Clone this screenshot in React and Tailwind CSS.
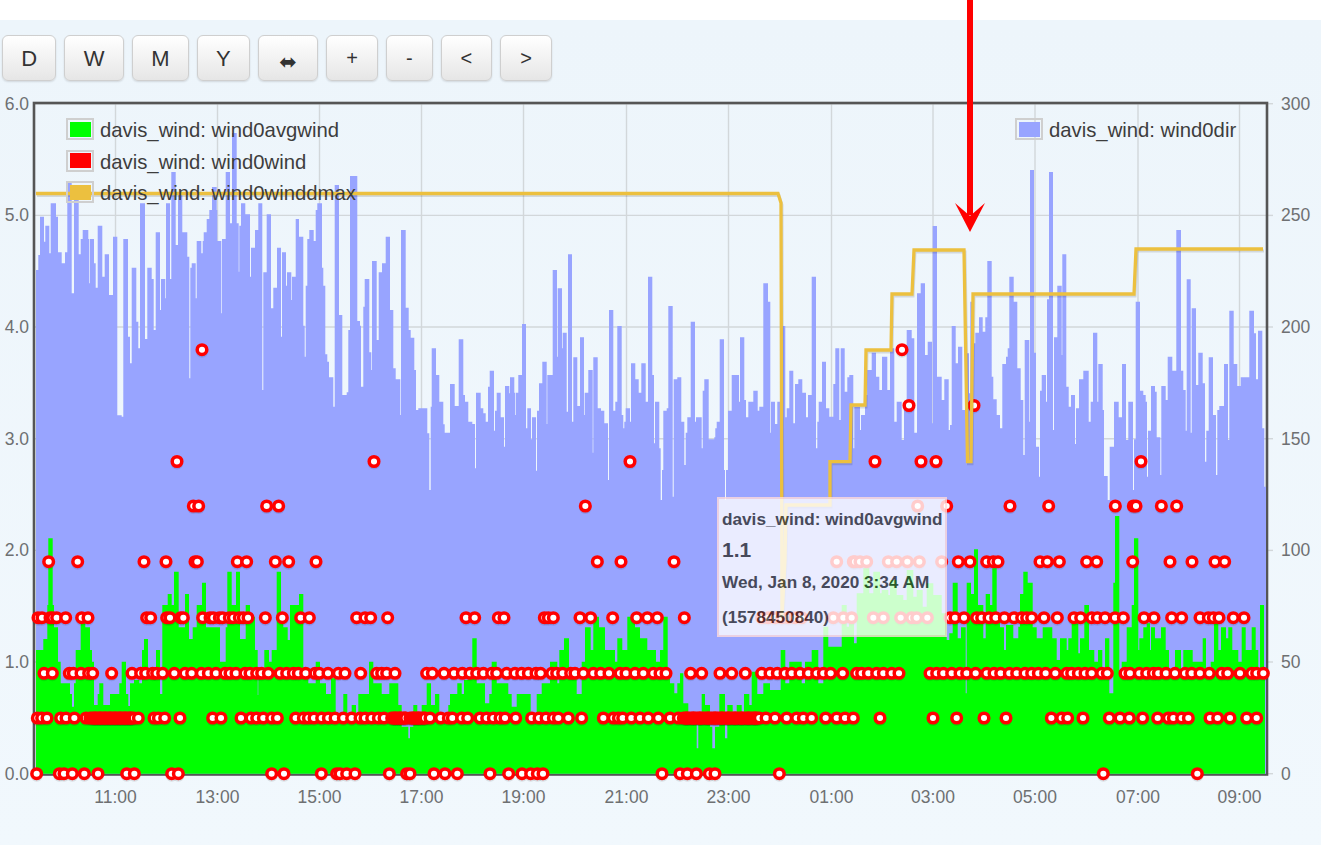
const buttons = ["D", "W", "M", "Y", "⬌", "+", "-", "<", ">"]

// silhouettes sampled from the chart at 3x: [x0, y0, [px, py, px, py, ...]]
const blueSteps = [
  [30, 190, [18,240,25,195,30,80,42,155,46,107,58,190,62,40,78,80,84,187,95,220,105,187,112,-21,125,310,132,20,146,193,152,147,158,120,175,147,178,280,180,147,192,220,197,293,203,107,217,260,224,193,237,315,249,140,262,676,275,680,280,147,294,440,300,520,305,233,319,395,325,475,330,40,345,447,352,233,365,267,371,420,377,127,390,360,393,267,406,325,408,40,420,267,424,-54,437,165,444,6,457,127,472,200,478,565,481,233,485,220,497,325,500,153,514,190,518,153,521,127,530,87,538,60,546,-9,560,60,562,153,574,370,576,147,587,-54,600,100,606,-171,620,100,626,245,628,107,633,40,646,73,660,260,663,173,675,120,685,40,697,600,700,247,710,73,723,355,730,293,741,173,753,440,756,187,768,287,771,247,784,330,786,260,797,87,807,140,820,407,824,500,827,287,832,147,838,120,851,153,857,60,862,40,876,233,880,287,886,493,892,515,897,562,910,650,914,-15,927,375,937,615,950,607,955,420,960,-42,982,393,990,407,993,590,1000,350,1004,267,1018,487,1024,540,1026,213,1040,450,1046,247,1056,220,1067,140,1080,360,1090,535,1097,568,1111,675,1113,120,1127,353,1136,420,1142,443,1153,540,1158,660,1165,655,1192,730,1198,900,1202,650,1205,475,1218,555,1228,635,1240,703,1244,728]],
  [440, 220, [30,492,44,558,56,358,70,525,75,545,85,605,97,612,105,745,108,518,122,565,130,580,137,605,144,500,149,452,162,632,165,572,170,518,182,592,192,680,195,498,208,520,210,472,223,518,226,585,228,518,235,465,246,312,258,625,262,565,273,658,276,592,288,752,291,572,297,490,307,425,320,612,322,465,338,150,351,410,353,205,366,385,368,338,380,575,384,103,396,605,400,412,412,558,420,352,432,585,434,518,445,450,458,698,460,412,473,565,483,572,493,610,504,780,507,270,520,572,526,545,532,318,545,585,550,625,553,605,557,565,570,605,573,430,586,478,596,518,604,430,617,545,624,170,637,465,642,670,645,545,658,685,662,840,666,750,670,572,680,565,685,258,698,830,701,478,712,472,724,605,733,735,737,638,742,592,752,305,765,605,768,592,785,685,788,512,793,478,806,658,823,652,826,625,830,605,839,358,852,750,855,840,858,750,864,572,875,465,897,545,900,352,913,540,918,592,925,545,940,512,953,572,958,560,970,190,984,245,991,638,993,545,1005,612,1012,545,1024,318,1036,592,1040,565,1048,452,1060,610,1065,492,1075,478,1087,518,1098,592,1104,525,1115,170,1128,685,1132,605,1136,545,1146,425,1158,565,1168,590,1180,492,1186,385,1198,600,1202,385,1214,515,1222,472,1228,465,1240,685,1243,560]],
  [760, 230, [300,600,303,555,315,495,322,420,335,368,348,440,358,480,366,380,382,480,390,355,403,575,410,515,425,630,432,525,440,300,455,325,463,608,471,190,482,160,495,375,503,335,516,580,518,-12,531,440,545,510,553,448,566,600]],
  [950, 220, [0,615,5,318,17,430,24,380,37,570,50,400,57,520,61,245,70,370,76,338,87,292,98,335,106,292,112,123,125,470,130,538,140,585,150,625,157,432,168,410,173,385,178,170,191,245,202,445,212,540,220,705,224,360,238,605,240,-150,252,398,258,680,267,770,270,512,275,465,288,545,291,238,297,-144,309,630,312,352,322,197,335,405,337,103,349,500,356,560,363,525,375,672,378,565,387,478,400,452,416,605,422,545,429,338,442,545,445,432,458,570,462,768,473,840,479,680,492,545,506,592,516,432,528,660,535,545,549,810,552,658,557,245,570,512,580,525,587,545,591,770,594,632,603,498,615,515,620,652,631,765,634,498,647,540,653,410,667,452,679,30,693,452,700,510,707,632,710,178,722,638,725,265,738,495,745,398,758,490,765,725,769,632,776,412,789,585,798,765,802,570,808,558,822,432,834,660,838,272,851,432,862,498,872,472,898,272,912,340,918,478,924,332,937,625,943,800]],
]

const greenSteps = [
  [30, 490, [18,480,40,447,52,345,55,145,68,345,72,412,84,515,92,580,120,612,126,650,132,580,137,480,152,400,166,412,180,480,186,515,192,645,203,612,208,580,220,645,240,612,268,580,275,515,288,612,295,648,300,580,312,570,328,580,336,480,342,447,354,550,378,480,390,612,397,345,413,312,425,345,432,245,446,412,465,312,477,447,488,412,500,345,516,278,528,412,570,515,587,412,592,245,605,345,618,245,630,447,647,345,660,380,675,480,683,615,685,550,703,480,717,515,725,480,740,245,753,380,760,412,773,450,780,345,807,312,820,560,835,580,857,515,870,580,888,612,903,565,917,670,940,612,952,680,965,645,978,670,985,612,1017,515,1030,580,1055,612,1078,580,1105,645,1115,710,1135,745,1140,710,1150,645,1162,680,1175,645,1190,580,1203,645,1215,612,1228,680,1255,645]],
  [440, 490, [30,612,40,612,52,580,65,612,72,570,85,550,97,445,110,580,135,640,148,612,155,515,170,580,205,612,215,650,230,612,272,680,290,612,305,580,330,515,352,580,358,480,372,445,387,550,410,612,425,515,435,412,452,480,460,380,477,412,495,480,525,515,532,445,547,480,562,380,585,412,600,445,622,480,648,515,660,480,670,380,683,555,690,580,703,610,712,580,720,550,730,640,745,680,770,775,775,680,785,612,795,645,810,710,817,775,825,710,838,612,855,745,862,645,878,680,890,645,905,680,912,612,928,645,935,545,952,612,970,580,990,600,1022,480,1036,580,1048,515,1068,515,1085,580,1095,515,1115,480,1135,580]],
  [700, 480, [370,440,385,500,425,375,440,440,447,420,462,490,470,340,490,265,508,340,520,275,540,340,545,330,565,345,570,300,590,345,610,360,620,270,640,350,650,330,668,380,680,310,700,345,715,345,725,400,740,480]],
  [850, 490, [298,430,308,278,323,445,333,412,347,610,350,278,363,312,372,178,384,345,400,445,407,312,420,345,427,235,440,380,450,412,462,480,468,405,490,445,505,410,510,312,520,245,533,278,548,412,560,445,578,412,607,445,620,510,630,445,650,480,655,445,665,400,685,490,690,445,703,345,717,480,733,515,744,480,757,550,765,445,778,610,790,278,795,78,808,540,815,515,830,412,845,345,852,145,865,480,868,445,880,412,890,400,900,480,903,412,915,445,933,412,947,480,957,550,975,480,993,545,1000,480,1013,480,1028,515,1045,515,1058,445,1068,550,1082,515,1092,400,1105,480,1113,412,1128,445,1135,412,1147,480,1165,515,1175,412,1187,480,1205,412,1217,480,1225,550,1230,345,1242,560]],
]

// wind0wind readings per row, same 3x sampling
const pointRows = [
  [349.7, [[0, [202, 902]]]],
  [405.5, [[0, [909, 974]]]],
  [461.5, [[0, [177, 374, 630, 875, 921, 936, 1141]]]],
  [506, [[30, [490,506,710,746]], [440, [436]], [850, [203,290,480,596,796,850,858,934,980]]]],
  [561.7, [[30, [56,143,342,408,495,502,622,650,736,776,858]], [440, [472,543,702,1190,1240]], [850, [15,30,50,115,140,172,208,275,325,360,410,430,444,570,592,628,710,740,848,960,1026,1095,1124]]]],
  [617.7, [[30, [24,36,60,68,80,107,155,174,350,362,410,420,452,460,518,540,550,568,578,598,610,628,640,654,706,757,812,838,980,1005,1022,1073]], [440, [78,104,175,192,313,325,340,420,452,518,590,622,652,733,965,985,1005,1025,1045,1065,1085,1180,1210]], [850, [5,70,100,152,185,200,232,300,315,342,380,395,417,437,463,492,515,530,545,582,622,672,692,725,742,765,795,820,882,912,965,995,1050,1075,1090,1107,1150,1182]]]],
  [673.3, [[30, [42,67,118,130,153,176,188,245,306,332,347,368,380,398,433,465,485,514,535,558,585,600,618,645,660,680,695,715,750,770,790,805,827,855,868,894,925,945,992,1040,1055,1070,1095,1190,1207,1242]], [440, [42,67,90,110,130,155,170,200,225,245,265,288,302,335,350,368,392,405,430,460,482,507,540,558,585,610,640,660,678,752,785,840,875,916,965,990,1012,1035,1055,1080,1105,1130,1150,1172,1208]], [850, [20,35,55,80,100,125,147,240,260,280,305,330,350,377,410,432,452,478,500,525,545,565,587,616,650,665,685,705,725,755,772,825,840,868,890,910,925,948,975,1005,1025,1050,1078,1115,1133,1170,1205,1220,1240]]]],
  [718, [[30, [22,35,51,92,108,133,168,195,210,225,240,255,270,285,300,325,372,385,404,450,548,573,633,663,680,700,725,742,797,820,835,852,875,895,915,940,965,990,1005,1025,1045,1062,1095,1110,1125,1150,1165,1185,1200,1232,1255]], [440, [37,65,83,120,140,160,180,195,227,275,297,318,340,355,385,425,490,520,535,548,574,600,625,655,690,715,740,760,780,805,825,845,865,885,905,925,945,978,1005,1040,1070,1090,1115,1157,1190,1215]], [850, [10,90,249,320,402,468,604,635,653,699,778,810,838,878,923,955,970,995,1015,1080,1103,1140,1190,1220]]]],
  [773.7, [[30, [20,88,102,127,163,204,290,313,425,445,725,762,874,920,930,950,975,1078,1130,1140,1212,1245]], [440, [52,150,206,246,272,292,309,666,720,742,769,808,825,1018]], [850, [760,1042]]]],
]

// stretches where the dots pile up into a solid red band: [y, x0, fromPx, toPx]
const denseRuns = [
  [718, 30, 180, 318], [718, 30, 1085, 1130], [718, 30, 1140, 1185],
  [718, 440, 730, 960],
]

const maxLine = "36,193.5 778,193.5 781,203 782,617 785,560 786,505 830,505 830,461.7 850,461.7 851,405 865,405 866,350 891,350 892,294 912,294 914,250 964,250 967.5,461.7 971,461.7 973,294 1134,294 1136,249 1263,249"

const gridX = [115.5, 217.5, 319.5, 421.5, 523.5, 626.5, 728.5, 831.5, 933, 1035, 1138, 1239.5]
const hours = ["11:00", "13:00", "15:00", "17:00", "19:00", "21:00", "23:00", "01:00", "03:00", "05:00", "07:00", "09:00"]
const gridY = [103.7, 215.4, 327, 438.7, 550.4, 662, 773.7]
const leftTicks = ["6.0", "5.0", "4.0", "3.0", "2.0", "1.0", "0.0"]
const rightTicks = ["300", "250", "200", "150", "100", "50", "0"]

function stepPath(segments, endX) {
  let d = ""
  for (const [x0, y0, data] of segments) {
    for (let i = 0; i < data.length; i += 2) {
      const x = (x0 + data[i] / 3).toFixed(1)
      const y = Math.min(773.7, y0 + data[i + 1] / 3).toFixed(1)
      d += d ? `H${x}V${y}` : `M${x} 773.7V${y}`
    }
  }
  return d + `H${endX}V773.7Z`
}

const sampled = pointRows.flatMap(([y, groups]) =>
  groups.flatMap(([x0, xs]) => xs.map((px) => ({ x: x0 ? x0 + px / 3 : px, y })))
)
const filled = denseRuns.flatMap(([y, x0, from, to]) => {
  const out = []
  for (let px = from; px < to; px += 6) out.push({ x: x0 + px / 3, y })
  return out
})
// later dots paint over earlier ones, left to right
const points = [...sampled, ...filled].sort((a, b) => a.x - b.x)

function Chart() {
  return (
    <svg viewBox="0 93 1321 752" className="block w-[1321px] h-[752px]">
      {gridX.map((x) => (
        <line key={x} x1={x} x2={x} y1="104" y2="774" stroke="#d2d7da" strokeWidth="1.4" />
      ))}
      {gridY.map((y) => (
        <g key={y}>
          <line x1="35" x2="1267" y1={y} y2={y} stroke="#d2d7da" strokeWidth="1.4" />
          <line x1="1268" x2="1273" y1={y} y2={y} stroke="#d2d7da" strokeWidth="1.4" />
        </g>
      ))}
      <rect x="34" y="103" width="1233" height="671.5" fill="none" stroke="#555555" strokeWidth="2.6" />

      <path d={stepPath(blueSteps, 1266)} fill="#98a4ff" />
      <path d={stepPath(greenSteps, 1265)} fill="#00ff00" />

      {points.map((p, i) => (
        <circle key={i} cx={p.x} cy={p.y + 1.8} r="6.2" fill="#000000" fillOpacity="0.1" />
      ))}
      {points.map((p, i) => (
        <circle key={i} cx={p.x} cy={p.y} r="4.8" fill="#ffffff" stroke="#ff0000" strokeWidth="3.5" />
      ))}

      <polyline points={maxLine} fill="none" stroke="#000000" strokeOpacity="0.12" strokeWidth="3" transform="translate(1 2)" />
      <polyline points={maxLine} fill="none" stroke="#ecc03f" strokeWidth="3.3" />

      <g className="fill-[#6e7072] text-[17.5px]">
        {leftTicks.map((t, i) => (
          <text key={t} x="29" y={gridY[i] + 6} textAnchor="end">{t}</text>
        ))}
        {rightTicks.map((t, i) => (
          <text key={t} x="1281" y={gridY[i] + 6}>{t}</text>
        ))}
        {hours.map((t, i) => (
          <text key={t} x={gridX[i]} y="803" textAnchor="middle">{t}</text>
        ))}
      </g>
    </svg>
  )
}

function LegendRow({ color, label }) {
  return (
    <div className="flex items-center gap-[6px] h-[22px]">
      <div className="w-[28px] h-[22px] border-2 border-[#cfcfcf] p-[1.5px]">
        <div className="w-full h-full" style={{ background: color }} />
      </div>
      <span className="relative top-[1.5px]">{label}</span>
    </div>
  )
}

export default function App() {
  return (
    <div className="relative w-full h-[845px] overflow-hidden bg-white [font-family:'Liberation_Sans',Arial,sans-serif]">
      <div className="h-5" />
      <div className="h-[825px] bg-[#eef6fc] bg-gradient-to-b from-[#edf5fb] to-[#f1f8fd]">
        <div className="flex gap-2 pl-[2px] pt-[15px] h-[73px]">
          {buttons.map((b) => (
            <button
              key={b}
              className={`h-[46px] rounded-md border border-[#cfcfcf] bg-gradient-to-b from-white to-[#e6e6e6] shadow-[0_1px_2px_rgba(0,0,0,0.12)] text-[#333333] ${
                "DWMY".includes(b) ? "px-[18.3px] text-[22px]" : b === "⬌" ? "px-[20.3px] text-[21px] pt-[9px] [font-family:'DejaVu_Sans',sans-serif]" : "px-[19px] text-[20px]"
              }`}
            >
              {b}
            </button>
          ))}
        </div>

        <div className="relative">
          <Chart />

          <div className="absolute left-[66px] top-[25px] flex flex-col gap-[9.5px] text-[20.3px] leading-none text-[#3d3d3d]">
            <LegendRow color="#00ff00" label="davis_wind: wind0avgwind" />
            <LegendRow color="#ff0000" label="davis_wind: wind0wind" />
            <LegendRow color="#ecc03f" label="davis_wind: wind0winddmax" />
          </div>
          <div className="absolute left-[1015px] top-[25px] text-[20.3px] leading-none text-[#3d3d3d]">
            <LegendRow color="#98a4ff" label="davis_wind: wind0dir" />
          </div>

          <div className="absolute left-[717px] top-[404px] w-[230px] h-[140px] border-2 border-[#ffdcdc] bg-white opacity-80 pl-[3px] pt-[10px] text-[#333333] font-bold text-[17.2px]">
            <div className="h-[20px] leading-[20px] whitespace-nowrap">davis_wind: wind0avgwind</div>
            <div className="mt-[9px] h-[24px] leading-[24px] text-[21px]">1.1</div>
            <div className="mt-[10px] h-[20px] leading-[20px] whitespace-nowrap">Wed, Jan 8, 2020 3:34 AM</div>
            <div className="mt-[15px] h-[20px] leading-[20px]">(1578450840)</div>
          </div>
        </div>
      </div>

      <svg className="absolute left-[950px] top-0" width="40" height="240" viewBox="950 0 40 240">
        <rect x="967" y="0" width="6" height="215" fill="#ff0000" />
        <path d="M955 203L970 232L985 203L970 216Z" fill="#ff0000" />
      </svg>
    </div>
  )
}
